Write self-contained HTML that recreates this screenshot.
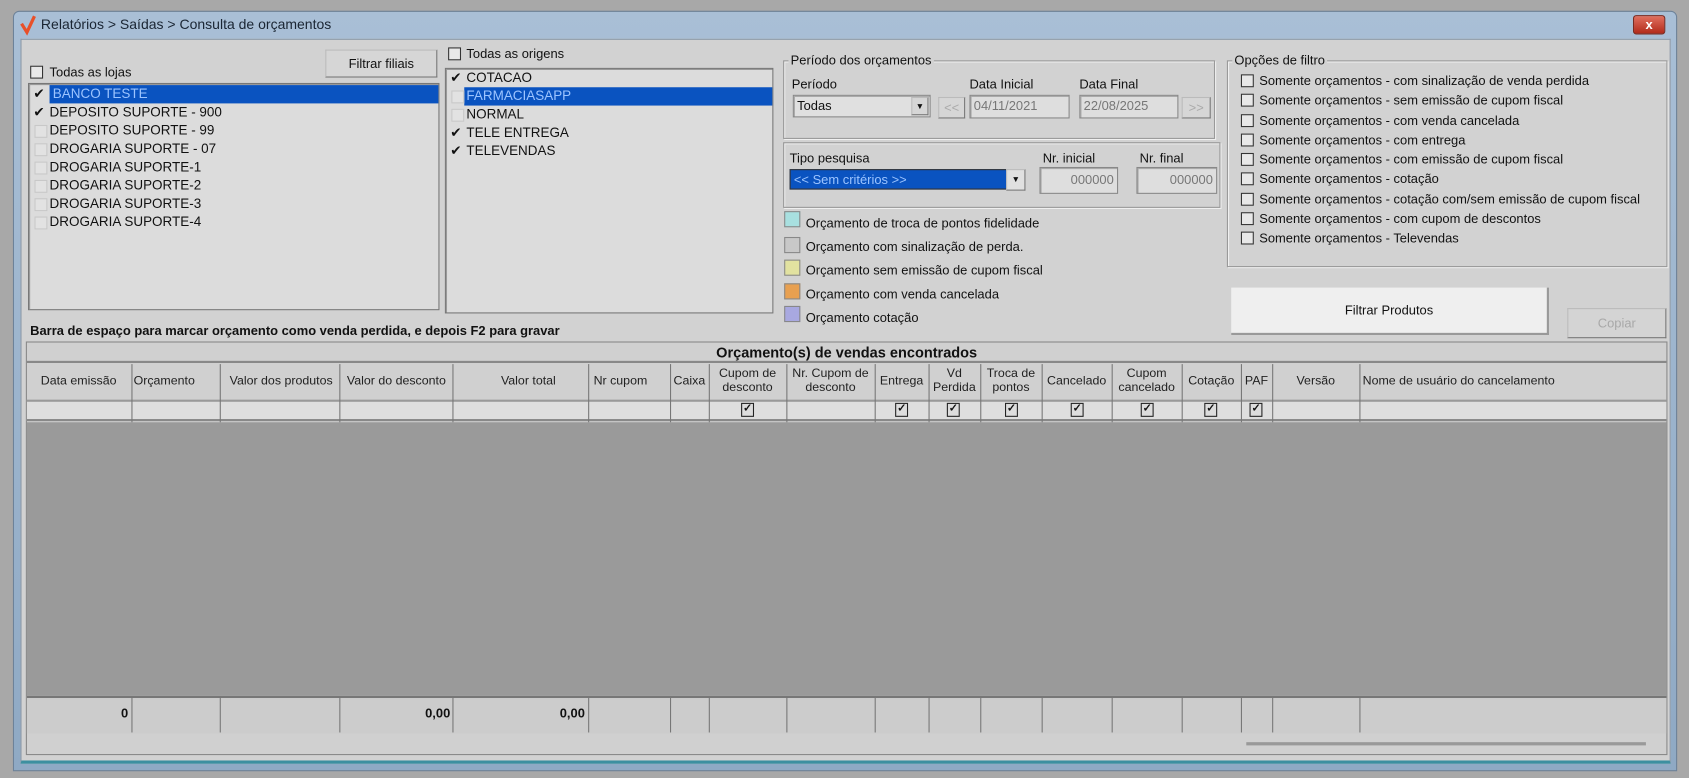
<!DOCTYPE html>
<html><head><meta charset="utf-8"><style>
*{box-sizing:border-box;margin:0;padding:0}
html,body{width:1689px;height:778px;overflow:hidden;background:#a8a8a8}
#w{position:absolute;left:0;top:0;width:1568px;height:722px;transform:scale(1.07717);transform-origin:0 0;font-family:"Liberation Sans",sans-serif;font-size:12px;color:#111;background:#a8a8a8}
.a{position:absolute}
.win{left:12px;top:10px;width:1545px;height:706px;background:linear-gradient(#a9bfd6,#8fa9c4);border:1px solid #6d8299;border-radius:6px 6px 0 0}
.body{left:19px;top:36px;width:1532px;height:673px;background:#d2d2d2;border:1px solid #8d9aa8;border-bottom:3px solid #3d8fa0}
.cb{position:absolute;width:12px;height:12px;border:1px solid #333;background:#e8e8e8}
.cbl{position:absolute;width:12px;height:12px;border:1px solid #c8c8c8;background:#e2e2e2}
.chk{font-size:11px;line-height:11px;text-align:center;font-weight:bold}
.list{background:#dcdcdc;border:1px solid #777;box-shadow:inset 1px 1px 0 #999}
.it{position:absolute;left:4px;height:17px;line-height:17px;font-size:12.5px;white-space:nowrap;width:100%}
.grp{border:1px solid #999;box-shadow:inset 1px 1px 0 #f0f0f0, 1px 1px 0 #f0f0f0}
.gt{position:absolute;top:-8px;left:6px;background:#d2d2d2;padding:0 2px;font-size:12px}
.inp{background:#dedede;border:1px solid #888;box-shadow:inset 1px 1px 0 #aaa;color:#777;padding:2px 3px}
.btn{background:#d6d6d6;border:1px solid #bbb;border-right-color:#777;border-bottom-color:#777;text-align:center}
.leg{position:absolute;width:15px;height:15px;border:1px solid #888}
.grid{left:24px;top:317px;width:1524px;height:384px;border:1px solid #888;background:#d0d0d0}
.col{position:absolute;top:0;height:100%;border-left:1px solid #777}
.hd{position:absolute;font-size:11.5px;text-align:center;line-height:13px;color:#222}
.gc{position:absolute;width:12px;height:13px;border:1.5px solid #222;font-size:10px;line-height:10px;text-align:center;font-weight:bold;background:#ddd}
</style></head><body><div id="w">
<div class="a win"></div>
<svg class="a" style="left:18px;top:13px" width="16" height="20"><path d="M2 9 L7 17 L14 2" stroke="#e8502a" stroke-width="3" fill="none"/></svg>
<div class="a" style="left:38px;top:15px;font-size:13px;color:#1a2533">Relatórios &gt; Saídas &gt; Consulta de orçamentos</div>
<div class="a" style="left:1516px;top:14px;width:30px;height:18px;background:linear-gradient(#e07060,#b22a1a);border:1px solid #7a2a20;border-radius:3px;color:#fff;font-weight:bold;text-align:center;line-height:16px;font-size:12px">x</div>
<div class="a body"></div>

<div class="cb" style="left:28px;top:61px"></div><div class="a" style="left:46px;top:60px">Todas as lojas</div>
<div class="a btn" style="left:302px;top:46px;width:104px;height:26px;line-height:24px">Filtrar filiais</div>
<div class="a list" style="left:26px;top:77px;width:382px;height:211px">
 <div class="a" style="left:19px;top:1px;width:361px;height:17px;background:#0a53c0"></div>
 <div class="it" style="top:1px"><span style="position:absolute;left:0;width:13px">✔</span><span style="position:absolute;left:18px;color:#9cc4ff">BANCO TESTE</span></div>
 <div class="it" style="top:18px"><span style="position:absolute;left:0">✔</span><span style="position:absolute;left:15px">DEPOSITO SUPORTE - 900</span></div>
 <div class="it" style="top:35px"><span class="cbl" style="left:1px;top:3px"></span><span style="position:absolute;left:15px">DEPOSITO SUPORTE - 99</span></div>
 <div class="it" style="top:52px"><span class="cbl" style="left:1px;top:3px"></span><span style="position:absolute;left:15px">DROGARIA SUPORTE - 07</span></div>
 <div class="it" style="top:69px"><span class="cbl" style="left:1px;top:3px"></span><span style="position:absolute;left:15px">DROGARIA SUPORTE-1</span></div>
 <div class="it" style="top:86px"><span class="cbl" style="left:1px;top:3px"></span><span style="position:absolute;left:15px">DROGARIA SUPORTE-2</span></div>
 <div class="it" style="top:103px"><span class="cbl" style="left:1px;top:3px"></span><span style="position:absolute;left:15px">DROGARIA SUPORTE-3</span></div>
 <div class="it" style="top:120px"><span class="cbl" style="left:1px;top:3px"></span><span style="position:absolute;left:15px">DROGARIA SUPORTE-4</span></div>
</div>

<div class="cb" style="left:416px;top:44px"></div><div class="a" style="left:433px;top:43px">Todas as origens</div>
<div class="a list" style="left:413px;top:63px;width:305px;height:228px">
 <div class="a" style="left:17px;top:17px;width:286px;height:17px;background:#0a53c0"></div>
 <div class="it" style="top:0px"><span style="position:absolute;left:0">✔</span><span style="position:absolute;left:15px">COTACAO</span></div>
 <div class="it" style="top:17px"><span class="cbl" style="left:1px;top:3px"></span><span style="position:absolute;left:15px;color:#9cc4ff">FARMACIASAPP</span></div>
 <div class="it" style="top:34px"><span class="cbl" style="left:1px;top:3px"></span><span style="position:absolute;left:15px">NORMAL</span></div>
 <div class="it" style="top:51px"><span style="position:absolute;left:0">✔</span><span style="position:absolute;left:15px">TELE ENTREGA</span></div>
 <div class="it" style="top:68px"><span style="position:absolute;left:0">✔</span><span style="position:absolute;left:15px">TELEVENDAS</span></div>
</div>

<div class="a grp" style="left:727px;top:56px;width:401px;height:73px"><div class="gt" style="left:4px">Período dos orçamentos</div></div>
<div class="a" style="left:735px;top:71px">Período</div>
<div class="a inp" style="left:736px;top:88px;width:128px;height:21px;color:#111;background:#e0e0e0">Todas</div>
<div class="a btn" style="left:846px;top:90px;width:16px;height:17px;font-size:8px;line-height:16px">▼</div>
<div class="a btn" style="left:871px;top:90px;width:25px;height:20px;color:#aaa;line-height:18px">&lt;&lt;</div>
<div class="a" style="left:900px;top:71px">Data Inicial</div>
<div class="a inp" style="left:900px;top:88px;width:93px;height:22px">04/11/2021</div>
<div class="a" style="left:1002px;top:71px">Data Final</div>
<div class="a inp" style="left:1002px;top:88px;width:92px;height:22px">22/08/2025</div>
<div class="a btn" style="left:1097px;top:90px;width:27px;height:20px;color:#aaa;line-height:18px">&gt;&gt;</div>

<div class="a grp" style="left:727px;top:132px;width:406px;height:61px"></div>
<div class="a" style="left:733px;top:140px">Tipo pesquisa</div>
<div class="a" style="left:733px;top:157px;width:203px;height:19px;background:#0a53c0;border:1px solid #333;color:#9cc4ff;padding:2px 3px">&lt;&lt; Sem critérios &gt;&gt;</div>
<div class="a btn" style="left:934px;top:157px;width:18px;height:20px;font-size:8px;line-height:18px;background:#e0e0e0">▼</div>
<div class="a" style="left:968px;top:140px">Nr. inicial</div>
<div class="a inp" style="left:965px;top:155px;width:73px;height:25px;text-align:right;padding-top:4px">000000</div>
<div class="a" style="left:1058px;top:140px">Nr. final</div>
<div class="a inp" style="left:1055px;top:155px;width:75px;height:25px;text-align:right;padding-top:4px">000000</div>

<div class="leg" style="left:728px;top:196px;background:#a8e0e0"></div><div class="a" style="left:748px;top:200px">Orçamento de troca de pontos fidelidade</div>
<div class="leg" style="left:728px;top:220px;background:#c8c8c8"></div><div class="a" style="left:748px;top:222px">Orçamento com sinalização de perda.</div>
<div class="leg" style="left:728px;top:241px;background:#e2e2a0"></div><div class="a" style="left:748px;top:244px">Orçamento sem emissão de cupom fiscal</div>
<div class="leg" style="left:728px;top:263px;background:#e8a050"></div><div class="a" style="left:748px;top:266px">Orçamento com venda cancelada</div>
<div class="leg" style="left:728px;top:284px;background:#a8a8e0"></div><div class="a" style="left:748px;top:288px">Orçamento cotação</div>

<div class="a grp" style="left:1139px;top:56px;width:409px;height:192px"><div class="gt" style="left:4px">Opções de filtro</div></div>
<div class="a" style="left:1152px;top:66px;line-height:18.3px">
<div><span class="cb" style="position:relative;display:inline-block;vertical-align:-2px;margin-right:5px"></span>Somente orçamentos - com sinalização de venda perdida</div>
<div><span class="cb" style="position:relative;display:inline-block;vertical-align:-2px;margin-right:5px"></span>Somente orçamentos - sem emissão de cupom fiscal</div>
<div><span class="cb" style="position:relative;display:inline-block;vertical-align:-2px;margin-right:5px"></span>Somente orçamentos - com venda cancelada</div>
<div><span class="cb" style="position:relative;display:inline-block;vertical-align:-2px;margin-right:5px"></span>Somente orçamentos - com entrega</div>
<div><span class="cb" style="position:relative;display:inline-block;vertical-align:-2px;margin-right:5px"></span>Somente orçamentos - com emissão de cupom fiscal</div>
<div><span class="cb" style="position:relative;display:inline-block;vertical-align:-2px;margin-right:5px"></span>Somente orçamentos - cotação</div>
<div><span class="cb" style="position:relative;display:inline-block;vertical-align:-2px;margin-right:5px"></span>Somente orçamentos - cotação com/sem emissão de cupom fiscal</div>
<div><span class="cb" style="position:relative;display:inline-block;vertical-align:-2px;margin-right:5px"></span>Somente orçamentos - com cupom de descontos</div>
<div><span class="cb" style="position:relative;display:inline-block;vertical-align:-2px;margin-right:5px"></span>Somente orçamentos - Televendas</div>
</div>

<div class="a" style="left:1143px;top:267px;width:295px;height:44px;background:#efefef;border-right:2px solid #999;border-bottom:2px solid #999;text-align:center;line-height:42px">Filtrar Produtos</div>
<div class="a btn" style="left:1455px;top:286px;width:92px;height:28px;line-height:26px;color:#a8a8a8;background:#d4d4d4">Copiar</div>

<div class="a" style="left:28px;top:300px;font-weight:bold;font-size:12px">Barra de espaço para marcar orçamento como venda perdida, e depois F2 para gravar</div>

<div class="a grid">
 <div class="a" style="left:0;top:0;width:100%;height:19px;text-align:center;font-weight:bold;font-size:13.5px;line-height:19px;border-bottom:2px solid #888">Orçamento(s) de vendas encontrados</div>
 <div class="a" style="left:0;top:20px;width:100%;height:54px">
  <div class="a" style="left:0;top:33px;width:100%;height:20px;background:#dedede;border-top:2px solid #999;border-bottom:2px solid #888"></div>
 </div>
 <div class="a" style="left:0;top:74px;width:100%;height:254px;background:#9a9a9a"></div>
 <div class="a" style="left:0;top:328px;width:100%;height:35px;background:#cccccc;border-top:2px solid #777"></div>
 <div class="a" style="left:1132px;top:371px;width:371px;height:3px;background:#999"></div>
</div>
<!-- column lines -->
<div class="a" style="left:24px;top:338px;width:1524px;height:54px">
 <div class="col" style="left:98px"></div><div class="col" style="left:180px"></div><div class="col" style="left:291px"></div><div class="col" style="left:396px"></div><div class="col" style="left:522px"></div><div class="col" style="left:598px"></div><div class="col" style="left:634px"></div><div class="col" style="left:706px"></div><div class="col" style="left:788px"></div><div class="col" style="left:838px"></div><div class="col" style="left:886px"></div><div class="col" style="left:943px"></div><div class="col" style="left:1008px"></div><div class="col" style="left:1073px"></div><div class="col" style="left:1128px"></div><div class="col" style="left:1157px"></div><div class="col" style="left:1238px"></div>
</div>
<div class="a" style="left:24px;top:647px;width:1524px;height:33px">
 <div class="col" style="left:98px"></div><div class="col" style="left:180px"></div><div class="col" style="left:291px"></div><div class="col" style="left:396px"></div><div class="col" style="left:522px"></div><div class="col" style="left:598px"></div><div class="col" style="left:634px"></div><div class="col" style="left:706px"></div><div class="col" style="left:788px"></div><div class="col" style="left:838px"></div><div class="col" style="left:886px"></div><div class="col" style="left:943px"></div><div class="col" style="left:1008px"></div><div class="col" style="left:1073px"></div><div class="col" style="left:1128px"></div><div class="col" style="left:1157px"></div><div class="col" style="left:1238px"></div>
</div>
<div class="hd" style="left:24px;top:348px;width:98px">Data emissão</div>
<div class="hd" style="left:124px;top:348px;width:60px;text-align:left">Orçamento</div>
<div class="hd" style="left:206px;top:348px;width:110px">Valor dos produtos</div>
<div class="hd" style="left:316px;top:348px;width:104px">Valor do desconto</div>
<div class="hd" style="left:420px;top:348px;width:126px;text-align:right;padding-right:30px">Valor total</div>
<div class="hd" style="left:546px;top:348px;width:60px">Nr cupom</div>
<div class="hd" style="left:622px;top:348px;width:36px">Caixa</div>
<div class="hd" style="left:658px;top:341px;width:72px">Cupom de<br>desconto</div>
<div class="hd" style="left:730px;top:341px;width:82px">Nr. Cupom de<br>desconto</div>
<div class="hd" style="left:812px;top:348px;width:50px">Entrega</div>
<div class="hd" style="left:862px;top:341px;width:48px">Vd<br>Perdida</div>
<div class="hd" style="left:910px;top:341px;width:57px">Troca de<br>pontos</div>
<div class="hd" style="left:967px;top:348px;width:65px">Cancelado</div>
<div class="hd" style="left:1032px;top:341px;width:65px">Cupom<br>cancelado</div>
<div class="hd" style="left:1097px;top:348px;width:55px">Cotação</div>
<div class="hd" style="left:1152px;top:348px;width:29px">PAF</div>
<div class="hd" style="left:1181px;top:348px;width:81px">Versão</div>
<div class="hd" style="left:1265px;top:348px;text-align:left">Nome de usuário do cancelamento</div>
<div class="gc" style="left:688px;top:374px">✓</div>
<div class="gc" style="left:831px;top:374px">✓</div>
<div class="gc" style="left:879px;top:374px">✓</div>
<div class="gc" style="left:933px;top:374px">✓</div>
<div class="gc" style="left:994px;top:374px">✓</div>
<div class="gc" style="left:1059px;top:374px">✓</div>
<div class="gc" style="left:1118px;top:374px">✓</div>
<div class="gc" style="left:1160px;top:374px">✓</div>
<div class="a" style="left:24px;top:655px;width:95px;text-align:right;font-weight:bold">0</div>
<div class="a" style="left:316px;top:655px;width:102px;text-align:right;font-weight:bold">0,00</div>
<div class="a" style="left:420px;top:655px;width:123px;text-align:right;font-weight:bold">0,00</div>
</div></body></html>
